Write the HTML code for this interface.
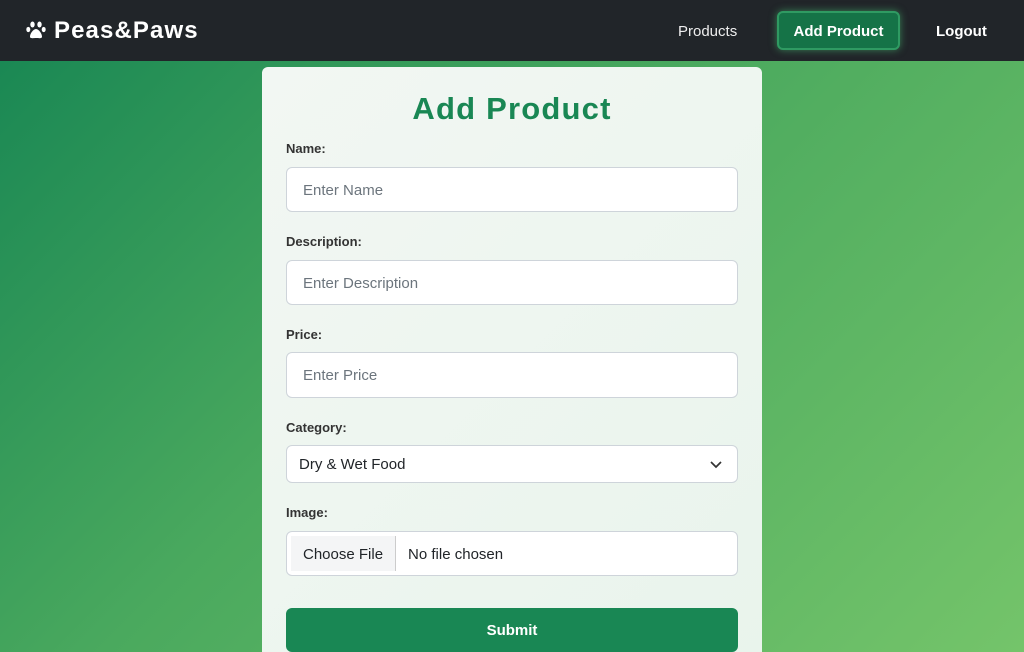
<!DOCTYPE html>
<html style="width:1024px;height:652px;overflow:hidden"><head><style>
*{box-sizing:border-box;margin:0;padding:0}
html,body{width:1024px;height:652px;overflow:hidden}
body{font-family:"Liberation Sans",sans-serif;background:linear-gradient(135deg,#168553 0%,#4aa95e 45%,#74c46a 100%);position:relative}
.nav{position:absolute;top:0;left:0;width:1024px;height:61px;background:#212529}
.brand{position:absolute;left:26px;top:17px;color:#fff;font-weight:bold;font-size:24px;letter-spacing:1.1px}
.nav a{position:absolute;color:#fff;font-size:15px;text-decoration:none}
.ap{left:777px;top:11px;width:123px;height:39px;background:#157347;border:2px solid #2f9a62;border-radius:6px;box-shadow:0 0 8px rgba(80,220,130,.5);font-weight:bold;text-align:center;line-height:37px}
.card{position:absolute;left:262px;top:67px;width:500px;height:600px;background:linear-gradient(135deg,#f2f7f3,#e9f4ec);border-radius:6px}
h1{position:absolute;left:0;width:500px;top:24px;text-align:center;color:#198754;font-size:31px;font-weight:bold;letter-spacing:1.2px}
label{position:absolute;left:24px;font-size:13px;font-weight:bold;color:#333}
.in{position:absolute;left:24px;width:452px;background:#fff;border:1px solid #ced4da;border-radius:6px;font-size:15px;color:#6c757d;padding-left:16px}
.btn{position:absolute;left:24px;top:541px;width:452px;height:44px;background:#198754;border-radius:6px;color:#fff;font-weight:bold;font-size:15px;text-align:center;line-height:46px}
</style></head><body>
<div class="nav">
<div class="brand"><svg width="20" height="18" viewBox="0 0 20 18" style="vertical-align:-1px;margin-right:8px"><g fill="#fff"><ellipse cx="6.5" cy="3.5" rx="2.2" ry="3"/><ellipse cx="13.5" cy="3.5" rx="2.2" ry="3"/><ellipse cx="2.3" cy="8.5" rx="2" ry="2.6"/><ellipse cx="17.7" cy="8.5" rx="2" ry="2.6"/><path d="M10 8c-3 0-6 5-6 7.5C4 18 7 17 10 17s6 1 6-1.5C16 13 13 8 10 8z"/></g></svg>Peas&amp;Paws</div>
<a style="left:678px;top:23px;color:#eee">Products</a>
<a class="ap">Add Product</a>
<a style="left:936px;top:23px;font-weight:bold">Logout</a>
</div>
<div class="card">
<h1>Add Product</h1>
<label style="top:74px">Name:</label>
<div class="in" style="top:100px;height:45px;line-height:45px">Enter Name</div>
<label style="top:167px">Description:</label>
<div class="in" style="top:193px;height:45px;line-height:45px">Enter Description</div>
<label style="top:260px">Price:</label>
<div class="in" style="top:285px;height:46px;line-height:46px">Enter Price</div>
<label style="top:353px">Category:</label>
<div class="in" style="top:378px;height:38px;line-height:38px;color:#212529;padding-left:12px">Dry &amp; Wet Food<svg width="12" height="8" viewBox="0 0 12 8" style="position:absolute;right:15px;top:15px"><path d="M1 1l5 5 5-5" stroke="#333" stroke-width="1.7" fill="none"/></svg></div>
<label style="top:438px">Image:</label>
<div class="in" style="top:464px;height:45px;line-height:43px;color:#212529;padding-left:0;overflow:hidden"><span style="display:inline-block;margin:4px 0 0 4px;height:35px;line-height:37px;padding:0 12px;background:#f4f5f6;border-right:1px solid #ccc;vertical-align:top">Choose File</span><span style="margin-left:12px;line-height:45px">No file chosen</span></div>
<div class="btn">Submit</div>
</div>
</body></html>
